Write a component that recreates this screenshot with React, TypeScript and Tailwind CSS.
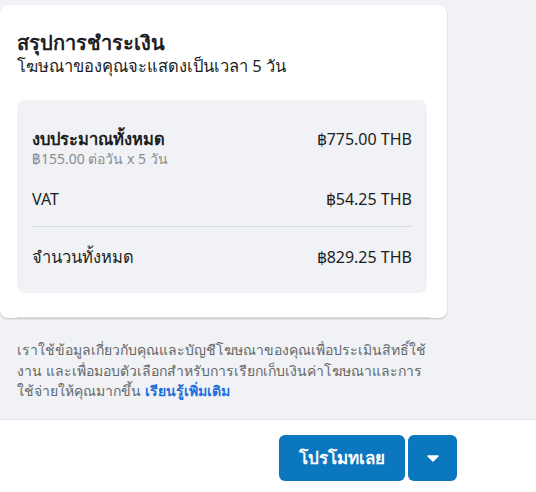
import React from 'react';

const font = { fontFamily: '"Segoe UI", "Noto Sans", "Liberation Sans", sans-serif' };

type RowProps = {
  label: string;
  value: string;
  labelClass?: string;
  sub?: string;
};

const Row: React.FC<RowProps> = ({ label, value, labelClass, sub }) => (
  <div className="flex justify-between">
    <div>
      <div className={`text-[16.5px] leading-[20px] text-[#1c1e21] ${labelClass ?? ''}`}>{label}</div>
      {sub && <div className="text-[14px] leading-[19px] text-[#8a8d91]">{sub}</div>}
    </div>
    <div className="text-[16px] leading-[20px] text-[#1c1e21]">{value}</div>
  </div>
);

export default function App() {
  return (
    <div style={font} className="w-[536px] h-[492px] bg-[#f0f2f5] flex flex-col overflow-hidden">
      <div className="pt-[5px]">
        <div className="w-[447px] bg-white rounded-lg shadow-[0_1px_2px_rgba(0,0,0,0.2)]">
          <div className="pl-[17px] pr-[20px] pt-[26px]">
            <h2 className="text-[20px] leading-[24px] font-bold text-[#1c1e21]">สรุปการชำระเงิน</h2>
            <p className="text-[16.5px] leading-[22px] text-[#1c1e21]">โฆษณาของคุณจะแสดงเป็นเวลา 5 วัน</p>

            <div className="mt-[23px] bg-[#f0f2f5] rounded-lg pl-[15px] pr-[15px] pt-[29px] pb-[26px]">
              <Row label="งบประมาณทั้งหมด" value="฿775.00 THB" labelClass="font-semibold" sub="฿155.00 ต่อวัน x 5 วัน" />
              <div className="mt-[21px]">
                <Row label="VAT" value="฿54.25 THB" labelClass="text-[16px]" />
              </div>
              <div className="mt-[17px] h-px bg-[#dadde1]" />
              <div className="mt-[20px]">
                <Row label="จำนวนทั้งหมด" value="฿829.25 THB" labelClass="font-medium" />
              </div>
            </div>
          </div>
          <div className="mt-[24px] mx-[17px] h-px bg-[#dadde1]" />
        </div>
      </div>

      <p className="mt-[22px] px-[17px] whitespace-nowrap text-[14px] leading-[20.5px] text-[#65676b]">
        เราใช้ข้อมูลเกี่ยวกับคุณและบัญชีโฆษณาของคุณเพื่อประเมินสิทธิ์ใช้
        <br />
        งาน และเพื่อมอบตัวเลือกสำหรับการเรียกเก็บเงินค่าโฆษณาและการ
        <br />
        ใช้จ่ายให้คุณมากขึ้น <a className="font-semibold text-[#216fdb]">เรียนรู้เพิ่มเติม</a>
      </p>

      <div className="mt-auto h-[73px] bg-white border-t border-[#e4e6eb] flex justify-end pr-[79px] pt-[15px]">
        <div className="flex gap-[3px] h-[46px]">
          <button className="w-[126px] rounded-md bg-[#0b77bf] text-white text-[17px] font-bold">โปรโมทเลย</button>
          <button className="w-[49px] rounded-md bg-[#0b77bf] flex items-center justify-center">
            <svg width="12" height="7" viewBox="0 0 12 7">
              <path d="M1 1h10L6 6z" fill="white" stroke="white" strokeLinejoin="round" strokeWidth="1.5" />
            </svg>
          </button>
        </div>
      </div>
    </div>
  );
}
